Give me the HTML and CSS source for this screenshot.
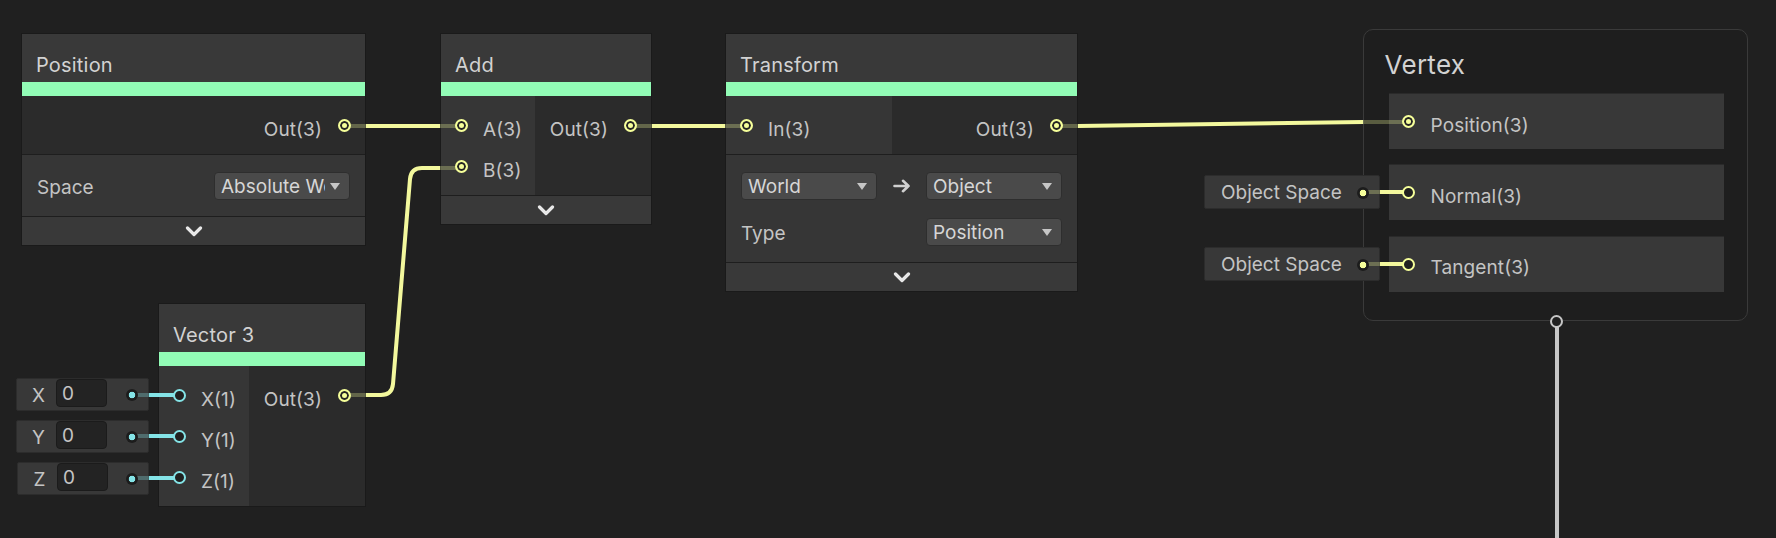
FILE: index.html
```html
<!DOCTYPE html>
<html>
<head>
<meta charset="utf-8">
<title>Shader Graph</title>
<link rel="stylesheet" href="styles.css">
</head>
<body>
<div class="canvas">

  <!-- Position node -->
  <div class="node n-position">
    <div class="node-title">Position</div>
    <div class="node-bar"></div>
    <div class="ports">
      <div class="col-out">
        <div class="port port-out"><span class="label">Out(3)</span><span class="pin pin-on"></span></div>
      </div>
    </div>
    <div class="props">
      <div class="prop-row">
        <span class="prop-label">Space</span>
        <div class="dropdown"><span class="dd-text">Absolute World</span><span class="dd-arrow"></span></div>
      </div>
    </div>
    <div class="collapse">
      <svg class="chev" width="18" height="11" viewBox="0 0 18 11"><path d="M2.5 2 L9 8.5 L15.5 2"/></svg>
    </div>
  </div>

  <!-- Add node -->
  <div class="node n-add">
    <div class="node-title">Add</div>
    <div class="node-bar"></div>
    <div class="ports">
      <div class="col-in">
        <div class="port port-in"><span class="pin pin-on"></span><span class="label">A(3)</span></div>
        <div class="port port-in"><span class="pin pin-on"></span><span class="label">B(3)</span></div>
      </div>
      <div class="col-out">
        <div class="port port-out"><span class="label">Out(3)</span><span class="pin pin-on"></span></div>
      </div>
    </div>
    <div class="collapse">
      <svg class="chev" width="18" height="11" viewBox="0 0 18 11"><path d="M2.5 2 L9 8.5 L15.5 2"/></svg>
    </div>
  </div>

  <!-- Transform node -->
  <div class="node n-transform">
    <div class="node-title">Transform</div>
    <div class="node-bar"></div>
    <div class="ports">
      <div class="col-in">
        <div class="port port-in"><span class="pin pin-on"></span><span class="label">In(3)</span></div>
      </div>
      <div class="col-out">
        <div class="port port-out"><span class="label">Out(3)</span><span class="pin pin-on"></span></div>
      </div>
    </div>
    <div class="props">
      <div class="prop-grid">
        <div class="dropdown"><span class="dd-text">World</span><span class="dd-arrow"></span></div>
        <div class="arrow-cell">
          <svg class="arrow" width="18" height="14" viewBox="0 0 18 14"><path d="M1.5 7 H15.5 M10 1.8 L15.5 7 L10 12.2"/></svg>
        </div>
        <div class="dropdown"><span class="dd-text">Object</span><span class="dd-arrow"></span></div>
        <span class="prop-label">Type</span>
        <span></span>
        <div class="dropdown"><span class="dd-text">Position</span><span class="dd-arrow"></span></div>
      </div>
    </div>
    <div class="collapse">
      <svg class="chev" width="18" height="11" viewBox="0 0 18 11"><path d="M2.5 2 L9 8.5 L15.5 2"/></svg>
    </div>
  </div>

  <!-- Vector 3 node -->
  <div class="node n-vector">
    <div class="node-title">Vector 3</div>
    <div class="node-bar"></div>
    <div class="ports">
      <div class="col-in">
        <div class="port port-in"><span class="pin pin-off pin-cyan"></span><span class="label">X(1)</span></div>
        <div class="port port-in"><span class="pin pin-off pin-cyan"></span><span class="label">Y(1)</span></div>
        <div class="port port-in"><span class="pin pin-off pin-cyan"></span><span class="label">Z(1)</span></div>
      </div>
      <div class="col-out">
        <div class="port port-out"><span class="label">Out(3)</span><span class="pin pin-on"></span></div>
      </div>
    </div>
  </div>

  <!-- Inline value fields for Vector 3 -->
  <div class="inline-vec iv-x"><span class="iv-label">X</span><span class="iv-field">0</span><span class="idot idot-cyan"></span></div>
  <div class="inline-vec iv-y"><span class="iv-label">Y</span><span class="iv-field">0</span><span class="idot idot-cyan"></span></div>
  <div class="inline-vec iv-z"><span class="iv-label">Z</span><span class="iv-field">0</span><span class="idot idot-cyan"></span></div>

  <!-- Vertex context -->
  <div class="vertex">
    <div class="vertex-title">Vertex</div>
    <div class="vblocks">
      <div class="vblock"><span class="pin pin-on"></span><span class="label">Position(3)</span></div>
      <div class="vblock"><span class="pin pin-off"></span><span class="label">Normal(3)</span></div>
      <div class="vblock"><span class="pin pin-off"></span><span class="label">Tangent(3)</span></div>
    </div>
    <span class="pin pin-flow"></span>
  </div>

  <div class="inline-os os-normal"><span>Object Space</span><span class="idot"></span></div>
  <div class="inline-os os-tangent"><span>Object Space</span><span class="idot"></span></div>

  <!-- Edges -->
  <svg class="wires" width="1776" height="538" viewBox="0 0 1776 538">
    <g class="dim-y">
      <line x1="344" y1="126" x2="366" y2="126"/>
      <line x1="440" y1="126" x2="461" y2="126"/>
      <line x1="344" y1="395" x2="366" y2="395"/>
      <line x1="440" y1="168" x2="461" y2="168"/>
      <line x1="631" y1="126" x2="652" y2="126"/>
      <line x1="725" y1="126" x2="746" y2="126"/>
      <line x1="1056" y1="126" x2="1078" y2="126"/>
      <line x1="1363" y1="122" x2="1409" y2="122"/>
      <line x1="1363" y1="192" x2="1380" y2="192"/>
      <line x1="1363" y1="264" x2="1380" y2="264"/>
    </g>
    <g class="bright-y">
      <line x1="366" y1="126" x2="440" y2="126"/>
      <path d="M366 395 H381 Q392 395 393 384 L410 179 Q411 168 422 168 H440"/>
      <line x1="652" y1="126" x2="725" y2="126"/>
      <line x1="1078" y1="126" x2="1363" y2="122"/>
      <line x1="1380" y1="192" x2="1404" y2="192"/>
      <line x1="1380" y1="264" x2="1404" y2="264"/>
    </g>
    <g class="dim-c">
      <line x1="132" y1="395" x2="149" y2="395"/>
      <line x1="132" y1="436" x2="149" y2="436"/>
      <line x1="132" y1="478" x2="149" y2="478"/>
    </g>
    <g class="bright-c">
      <line x1="149" y1="395" x2="174" y2="395"/>
      <line x1="149" y1="436" x2="174" y2="436"/>
      <line x1="149" y1="478" x2="174" y2="478"/>
    </g>
    <line class="flow" x1="1557" y1="327" x2="1557" y2="538"/>
  </svg>
</div>
</body>
</html>
```

FILE: styles.css
```css
* { box-sizing: border-box; }
html, body { margin: 0; padding: 0; }
body {
  background: #202020;
  font-family: Inter, "Noto Sans", sans-serif;
  color: #c4c4c4;
}
.canvas {
  position: relative;
  width: 1776px;
  height: 538px;
  overflow: hidden;
  background: #202020;
}

/* ---------- nodes ---------- */
.node {
  position: absolute;
  border: 1px solid #1a1a1a;
  background: #2b2b2b;
}
.n-position { left: 21px; top: 33px; width: 345px; }
.n-add { left: 440px; top: 33px; width: 212px; }
.n-transform { left: 725px; top: 33px; width: 353px; }
.n-vector { left: 158px; top: 303px; width: 208px; }

.node-title {
  height: 48px;
  padding: 16px 0 0 14px;
  line-height: 30px;
  font-size: 20px;
  letter-spacing: 0.2px;
  background: #393939;
  color: #d2d2d2;
}
.node-bar { height: 14px; background: #92fcb6; }

.ports {
  display: flex;
  border-bottom: 1px solid #1e1e1e;
}
.n-vector .ports { border-bottom: 0; }
.col-in { background: #363636; padding: 9px 0 8px; }
.col-out { flex: 1; background: #2b2b2b; padding: 9px 0 8px; }
.n-add .col-in { width: 94px; }
.n-transform .col-in { width: 166px; }
.n-vector .col-in { width: 90px; }

.port {
  height: 41px;
  display: flex;
  align-items: center;
  font-size: 19px;
  white-space: nowrap;
}
.port-in { padding-left: 14px; }
.port-in .label { margin-left: 15px; }
.port-out { justify-content: flex-end; padding-right: 14px; }
.port-out .label { margin-right: 16px; }
.label { padding-top: 8px; line-height: 24px; color: #c4c4c4; letter-spacing: 0.1px; }

/* ---------- pins ---------- */
.pin {
  position: relative;
  z-index: 3;
  flex: none;
  display: block;
  width: 13px;
  height: 13px;
  border-radius: 50%;
  border: 2px solid #f6ff9a;
  background: #202020;
}
.pin-on {
  background: #f6ff9a;
  box-shadow: inset 0 0 0 2px #242424;
}
.pin-cyan { border-color: #84e4e7; }
.pin-flow {
  position: absolute;
  left: 186px;
  bottom: -8px;
  border-color: #c6c6c6;
  background: #1f1f1f;
}

/* ---------- properties ---------- */
.props {
  background: #363636;
  padding: 8px 15px 7px 15px;
  border-bottom: 1px solid #1e1e1e;
}
.prop-row {
  height: 46px;
  display: flex;
  align-items: center;
  justify-content: space-between;
}
.prop-label { font-size: 19px; color: #c4c4c4; padding-top: 2px; }
.prop-grid {
  display: grid;
  grid-template-columns: 136px 1fr 136px;
  grid-auto-rows: 46px;
  align-items: center;
}
.arrow-cell { display: flex; justify-content: center; align-items: center; }
.arrow path {
  stroke: #d0d0d0;
  stroke-width: 2.6;
  fill: none;
  stroke-linecap: round;
  stroke-linejoin: round;
}

.dropdown {
  width: 136px;
  height: 28px;
  display: flex;
  align-items: center;
  padding: 0 9px 0 6px;
  border-radius: 4px;
  background: #4a4a4a;
  border: 1px solid #2e2e2e;
  font-size: 19px;
  color: #d6d6d6;
}
.dd-text {
  flex: 1;
  overflow: hidden;
  white-space: nowrap;
  margin-right: 5px;
  padding-top: 2px;
  line-height: 26px;
}
.dd-arrow {
  flex: none;
  width: 0;
  height: 0;
  border-left: 5.5px solid transparent;
  border-right: 5.5px solid transparent;
  border-top: 7px solid #c6c6c6;
}

.collapse {
  height: 28px;
  background: #393939;
  display: flex;
  align-items: center;
  justify-content: center;
}
.chev path {
  stroke: #e8e8e8;
  stroke-width: 3.2;
  fill: none;
  stroke-linecap: round;
  stroke-linejoin: round;
}

/* ---------- inline value fields ---------- */
.inline-vec {
  position: absolute;
  left: 16px;
  width: 133px;
  height: 33px;
  display: flex;
  align-items: center;
  background: #383838;
  border: 1px solid #2c2c2c;
  border-radius: 2px;
  font-size: 19px;
}
.iv-x { top: 378px; }
.iv-y { top: 420px; }
.iv-z { top: 462px; left: 17px; width: 132px; }
.iv-label {
  width: 39px;
  padding-left: 4px;
  padding-top: 1px;
  text-align: center;
  color: #c4c4c4;
}
.iv-field {
  align-self: flex-start;
  width: 51px;
  height: 28px;
  line-height: 27px;
  padding-left: 5px;
  border-radius: 4px;
  background: #232323;
  border: 1px solid #1b1b1b;
  color: #c4c4c4;
}
.idot {
  position: relative;
  z-index: 3;
  flex: none;
  margin-left: auto;
  margin-right: 10px;
  width: 12px;
  height: 12px;
  border-radius: 50%;
  background: radial-gradient(circle, #f6ff9a 0 3px, #1c1c1c 3.6px);
}
.idot-cyan { background: radial-gradient(circle, #84e4e7 0 3px, #1c1c1c 3.6px); }

.inline-os {
  position: absolute;
  left: 1204px;
  width: 176px;
  height: 34px;
  display: flex;
  align-items: center;
  padding-left: 16px;
  padding-top: 1px;
  background: #383838;
  border: 1px solid #2c2c2c;
  border-radius: 2px;
  font-size: 19px;
  color: #c4c4c4;
  white-space: nowrap;
}
.os-normal { top: 175px; }
.os-tangent { top: 247px; }

/* ---------- vertex context ---------- */
.vertex {
  position: absolute;
  left: 1363px;
  top: 29px;
  width: 385px;
  height: 292px;
  border: 1.5px solid #3a3a3a;
  border-radius: 10px;
  background: #1e1e1e;
}
.vertex-title {
  padding: 20px 0 0 20.5px;
  line-height: 30px;
  font-size: 26px;
  letter-spacing: 0.3px;
  color: #d2d2d2;
}
.vblocks {
  display: flex;
  flex-direction: column;
  gap: 15.3px;
  margin-top: 13px;
  padding: 0 23.5px 0 24.5px;
}
.vblock {
  height: 56px;
  display: flex;
  align-items: center;
  padding-left: 13.5px;
  background: #383838;
  border-top: 1px solid #2a2a2a;
  font-size: 19px;
}
.vblock .label { margin-left: 15.5px; }

/* ---------- edges ---------- */
.wires {
  position: absolute;
  left: 0;
  top: 0;
  z-index: 2;
  pointer-events: none;
}
.wires line, .wires path { fill: none; stroke-width: 4; }
.dim-y line { stroke: #f6ff9a; stroke-opacity: 0.28; }
.bright-y line, .bright-y path { stroke: #f3f89d; }
.dim-c line { stroke: #84e4e7; stroke-opacity: 0.3; }
.bright-c line { stroke: #84e4e7; }
.wires .flow { stroke: #c6c6c6; stroke-width: 4; }
```
